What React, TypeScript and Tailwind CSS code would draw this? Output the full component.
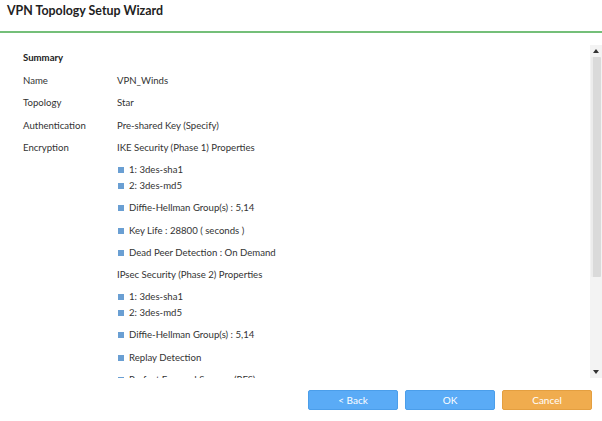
import React from 'react';

const rows: { label: string; value: string }[] = [
  { label: 'Name', value: 'VPN_Winds' },
  { label: 'Topology', value: 'Star' },
  { label: 'Authentication', value: 'Pre-shared Key (Specify)' },
];

type Block = { kind: 'head'; text: string } | { kind: 'list'; items: string[] };

const encryption: Block[] = [
  { kind: 'head', text: 'IKE Security (Phase 1) Properties' },
  { kind: 'list', items: ['1: 3des-sha1', '2: 3des-md5'] },
  { kind: 'list', items: ['Diffie-Hellman Group(s) : 5,14'] },
  { kind: 'list', items: ['Key Life : 28800 ( seconds )'] },
  { kind: 'list', items: ['Dead Peer Detection : On Demand'] },
  { kind: 'head', text: 'IPsec Security (Phase 2) Properties' },
  { kind: 'list', items: ['1: 3des-sha1', '2: 3des-md5'] },
  { kind: 'list', items: ['Diffie-Hellman Group(s) : 5,14'] },
  { kind: 'list', items: ['Replay Detection'] },
  { kind: 'list', items: ['Perfect Forward Secrecy (PFS)'] },
];

const Bullet = ({ text }: { text: string }) => (
  <div className="flex items-center h-[16px]">
    <span className="w-[6px] h-[6px] bg-[#6a9fd3] ml-[1px] mr-[5px] shrink-0" />
    <span>{text}</span>
  </div>
);

const Scrollbar = () => (
  <div className="w-[12px] h-full flex flex-col bg-[#f3f3f3] shrink-0">
    <div className="h-[12px] flex items-center justify-center">
      <svg width="6" height="4" viewBox="0 0 6 4">
        <polygon points="3,0 6,4 0,4" fill="#333" />
      </svg>
    </div>
    <div className="flex-1 flex flex-col px-[1px]">
      <div className="h-[220px] bg-[#dadada] border-l-2 border-[#ececec] rounded-[1px]" />
      <div className="flex-1" />
    </div>
    <div className="h-[12px] flex items-center justify-center">
      <svg width="6" height="4" viewBox="0 0 6 4">
        <polygon points="0,0 6,0 3,4" fill="#333" />
      </svg>
    </div>
  </div>
);

export default function App() {
  return (
    <div className="w-[602px] h-[421px] bg-white overflow-hidden flex flex-col text-[#333] font-['Lato','Liberation_Sans',sans-serif]">
      <div className="h-[33px] shrink-0 border-b-2 border-[#74bf79] px-[7px] pt-[3px]">
        <h1 className="text-[12.4px] font-bold leading-[16px] text-[#222]">VPN Topology Setup Wizard</h1>
      </div>

      <div className="h-[12px] shrink-0" />

      <div className="h-[333px] shrink-0 flex">
        <div className="flex-1 overflow-hidden pl-[23px] pt-[5px] text-[9.6px] leading-[16px]">
          <div className="font-bold text-[#222] h-[22.5px]">Summary</div>
          {rows.map((r) => (
            <div key={r.label} className="flex h-[22.5px]">
              <div className="w-[94px] shrink-0">{r.label}</div>
              <div>{r.value}</div>
            </div>
          ))}
          <div className="flex">
            <div className="w-[94px] shrink-0">Encryption</div>
            <div className="flex flex-col gap-[6.2px]">
              {encryption.map((b, i) =>
                b.kind === 'head' ? (
                  <div key={i} className="h-[16px]">{b.text}</div>
                ) : (
                  <div key={i}>
                    {b.items.map((t) => (
                      <Bullet key={t} text={t} />
                    ))}
                  </div>
                )
              )}
            </div>
          </div>
        </div>
        <Scrollbar />
      </div>

      <div className="flex-1 flex justify-end items-start pt-[12px] pr-[10px] gap-[7px]">
        <button className="w-[90px] h-[20px] rounded-[2px] bg-[#5aabf6] border border-[#4b9eea] text-white text-[10px]">
          &lt; Back
        </button>
        <button className="w-[90px] h-[20px] rounded-[2px] bg-[#5aabf6] border border-[#4b9eea] text-white text-[10px]">
          OK
        </button>
        <button className="w-[90px] h-[20px] rounded-[2px] bg-[#f0ac4e] border border-[#e49f40] text-white text-[10px]">
          Cancel
        </button>
      </div>
    </div>
  );
}
